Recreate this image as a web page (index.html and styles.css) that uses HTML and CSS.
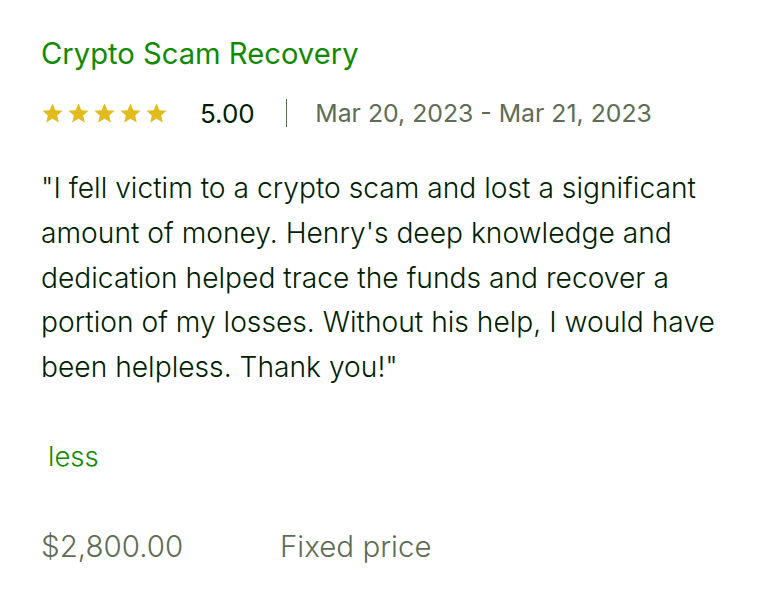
FILE: index.html
```html
<!DOCTYPE html>
<html>
<head>
<meta charset="utf-8">
<link rel="stylesheet" href="styles.css">
</head>
<body>
<div class="card">
  <h2 class="title">Crypto Scam Recovery</h2>
  <div class="meta">
    <div class="stars">
      <svg viewBox="0 0 24 24" class="star"><path d="M12 1.5l3.1 7 7.4.6-5.6 4.9 1.7 7.4L12 17.5l-6.6 3.9 1.7-7.4L1.5 9.1l7.4-.6z"/></svg>
      <svg viewBox="0 0 24 24" class="star"><path d="M12 1.5l3.1 7 7.4.6-5.6 4.9 1.7 7.4L12 17.5l-6.6 3.9 1.7-7.4L1.5 9.1l7.4-.6z"/></svg>
      <svg viewBox="0 0 24 24" class="star"><path d="M12 1.5l3.1 7 7.4.6-5.6 4.9 1.7 7.4L12 17.5l-6.6 3.9 1.7-7.4L1.5 9.1l7.4-.6z"/></svg>
      <svg viewBox="0 0 24 24" class="star"><path d="M12 1.5l3.1 7 7.4.6-5.6 4.9 1.7 7.4L12 17.5l-6.6 3.9 1.7-7.4L1.5 9.1l7.4-.6z"/></svg>
      <svg viewBox="0 0 24 24" class="star"><path d="M12 1.5l3.1 7 7.4.6-5.6 4.9 1.7 7.4L12 17.5l-6.6 3.9 1.7-7.4L1.5 9.1l7.4-.6z"/></svg>
    </div>
    <span class="score">5.00</span>
    <span class="sep"></span>
    <span class="dates">Mar 20, 2023 - Mar 21, 2023</span>
  </div>
  <p class="review">"I fell victim to a crypto scam and lost a significant amount of money. Henry's deep knowledge and dedication helped trace the funds and recover a portion of my losses. Without his help, I would have been helpless. Thank you!"</p>
  <a class="less" href="#">less</a>
  <div class="price">
    <span class="amount">$2,800.00</span>
    <span class="type">Fixed price</span>
  </div>
</div>
</body>
</html>
```
FILE: styles.css
```css
html, body {
  margin: 0;
  padding: 0;
  background: #fff;
}
body {
  font-family: Inter, "Liberation Sans", Arial, sans-serif;
  color: #001e00;
}
.card {
  padding: 36px 20px 0 41px;
  width: 700px;
}
.title {
  margin: 0;
  font-size: 29.2px;
  font-weight: 400;
  line-height: 36px;
  color: #108a00;
}
.meta {
  display: flex;
  align-items: center;
  margin-top: 25px;
  height: 32px;
}
.stars {
  display: flex;
  gap: 3px;
}
.star {
  width: 23px;
  height: 23px;
  fill: #e2bc1f;
}
.score {
  margin-left: 32px;
  font-size: 26px;
  color: #001e00;
}
.sep {
  width: 1.5px;
  height: 28px;
  background: #5e6d55;
  margin: 0 28px 0 31px;
}
.dates {
  font-size: 24.8px;
  color: #5e6d55;
}
.review {
  margin: 37px 0 0 0;
  font-size: 28.2px;
  font-weight: 350;
  line-height: 44.75px;
  color: #001e00;
  width: 700px;
}
.less {
  display: inline-block;
  margin: 51px 0 0 7px;
  font-size: 27.5px;
  font-weight: 350;
  line-height: 30px;
  color: #108a00;
  text-decoration: none;
}
.price {
  display: flex;
  margin-top: 57px;
  font-size: 29.5px;
  font-weight: 350;
  color: #5e6d55;
}
.amount {
  width: 239px;
}
```
